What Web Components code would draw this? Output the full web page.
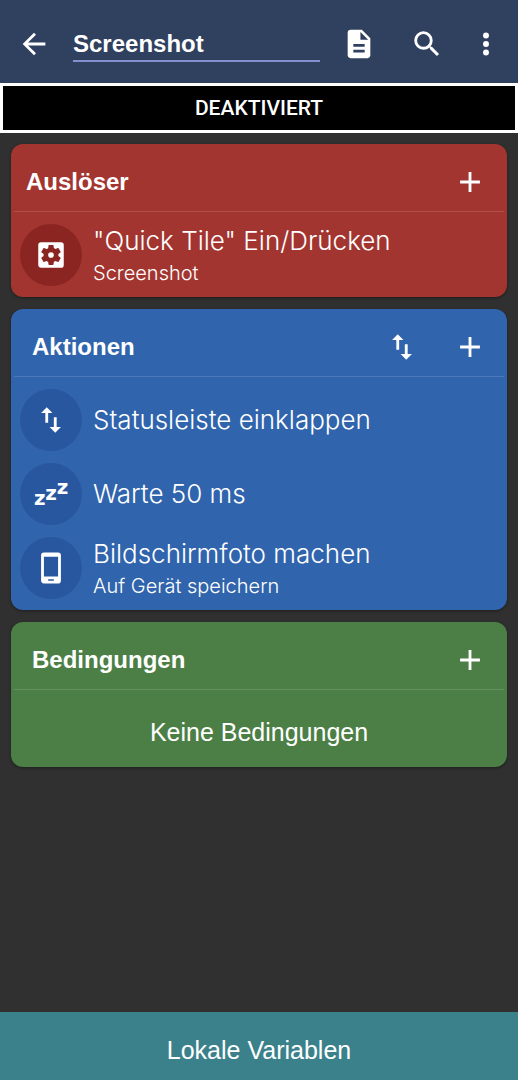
<!DOCTYPE html>
<html lang="de">
<head>
<meta charset="utf-8">
<meta name="viewport" content="width=device-width, initial-scale=1">
<title>Screenshot</title>
<style>
  body { margin: 0; background: #303030; color: #fff; font-family: "Liberation Sans", Arial, sans-serif; }
</style>
</head>
<body>
<macro-editor></macro-editor>

<script>
const ICONS = {
  back: '<path d="M20 11H7.800l5.600-5.600L12 4l-8 8 8 8 1.400-1.400L7.800 13H20z"/>',
  file: '<path fill-rule="evenodd" d="M14 2H6c-1.100 0-2 .9-2 2v16c0 1.100.9 2 2 2h12c1.100 0 2-.9 2-2V8zM16 18H8v-2h8zM16 14H8v-2h8zM13 9V3.500L18.500 9z"/>',
  search: '<path d="M15.500 14h-.79l-.28-.27A6.471 6.471 0 0 0 16 9.500 6.500 6.500 0 1 0 9.500 16c1.610 0 3.090-.59 4.230-1.570l.27.28v.79l5 4.990L20.490 19zM9.500 14a4.500 4.500 0 1 1 0-9 4.500 4.500 0 0 1 0 9z"/>',
  more: '<circle cx="12" cy="6" r="2.100"/><circle cx="12" cy="12" r="2.100"/><circle cx="12" cy="18" r="2.100"/>',
  plus: '<path d="M19 13h-6v6h-2v-6H5v-2h6V5h2v6h6z"/>',
  swap: '<path d="M16 17V10h-2v7h-3l4 4 4-4zM9 3L5 7h3v7h2V7h3z"/>',
  gear: '<path d="M12 10a2 2 0 1 0 0 4 2 2 0 0 0 0-4zm7-7H5a2 2 0 0 0-2 2v14c0 1.100.9 2 2 2h14a2 2 0 0 0 2-2V5a2 2 0 0 0-2-2zm-1.750 9c0 .23-.02.46-.05.68l1.480 1.160c.13.11.17.3.08.45l-1.400 2.420c-.09.15-.27.21-.43.15l-1.740-.7c-.36.28-.76.51-1.180.69l-.26 1.850c-.03.17-.18.3-.35.3h-2.800c-.17 0-.32-.13-.35-.29l-.26-1.850c-.43-.18-.82-.41-1.180-.69l-1.740.7c-.16.06-.34 0-.43-.15l-1.400-2.420c-.09-.15-.05-.34.08-.45l1.480-1.160c-.03-.23-.05-.46-.05-.69s.02-.46.05-.68l-1.480-1.160c-.13-.11-.17-.3-.08-.45l1.400-2.420c.09-.15.27-.21.43-.15l1.740.7c.36-.28.76-.51 1.180-.69l.26-1.850c.03-.17.18-.3.35-.3h2.800c.17 0 .32.13.35.29l.26 1.850c.43.18.82.41 1.180.69l1.740-.7c.16-.06.34 0 .43.15l1.400 2.420c.09.15.05.34-.08.45l-1.480 1.160c.03.23.05.46.05.69z"/>',
  phone: '<path fill-rule="evenodd" d="M17 1H7a2 2 0 0 0-2 2v18c0 1.100.9 2 2 2h10a2 2 0 0 0 2-2V3a2 2 0 0 0-2-2zM14 21h-4v-1h4zM17 18H7V4h10z"/>',
  sleep: '<g font-family="DejaVu Sans" font-weight="700" font-size="14"><text x="0" y="20">z</text><text x="8" y="16">z</text><text x="16" y="12">z</text></g>'
};

function define(name, html, setup) {
  customElements.define(name, class extends HTMLElement {
    constructor() {
      super();
      const template = document.createElement('template');
      template.innerHTML = html;
      this.attachShadow({ mode: 'open' }).append(template.content.cloneNode(true));
    }
    connectedCallback() { if (setup) setup(this, this.shadowRoot); }
  });
}

define('app-icon', `
  <style>
    :host { display: block; width: 34px; height: 34px; flex: none; }
    svg { display: block; width: 100%; height: 100%; fill: #fff; overflow: visible; }
  </style>
  <svg viewBox="0 0 24 24" aria-hidden="true"></svg>`,
  (el, root) => { root.querySelector('svg').innerHTML = ICONS[el.getAttribute('name')]; });

define('icon-button', `
  <style>
    :host { display: block; flex: none; }
    button { display: block; margin: 0; padding: 0; border: 0; background: none; cursor: pointer; }
  </style>
  <button type="button"></button>`,
  (el, root) => {
    const button = root.querySelector('button');
    button.setAttribute('aria-label', el.getAttribute('label'));
    const icon = document.createElement('app-icon');
    icon.setAttribute('name', el.getAttribute('icon'));
    button.replaceChildren(icon);
  });

define('app-header', `
  <style>
    :host { display: block; background: #30405f; }
    header { display: flex; align-items: center; height: 83px; padding: 4px 15px 0 17px; box-sizing: border-box; }
    input { flex: 1; min-width: 0; height: 36px; margin: 0 22px; padding: 2px 0 0; box-sizing: border-box; border: 0;
      border-bottom: 2px solid #8490cb; border-radius: 0; outline: 0; background: none; color: #fff;
      font: bold 24px "Liberation Sans", Arial, sans-serif; }
    .tools { display: flex; gap: 34px; }
    .more { margin-left: 25px; }
  </style>
  <header>
    <icon-button icon="back" label="Zurück"></icon-button>
    <input type="text" value="Screenshot" aria-label="Makroname" spellcheck="false">
    <div class="tools">
      <icon-button icon="file" label="Protokoll"></icon-button>
      <icon-button icon="search" label="Suchen"></icon-button>
    </div>
    <icon-button class="more" icon="more" label="Mehr"></icon-button>
  </header>`);

define('status-banner', `
  <style>
    :host { display: block; }
    button { display: block; width: 100%; height: 50px; margin: 0; padding: 0; border: 3px solid #fff;
      background: #000; color: #fff; font: 500 21px Roboto, sans-serif; }
  </style>
  <button type="button"><slot></slot></button>`);

define('macro-card', `
  <style>
    :host { display: block; border-radius: 12px; background: var(--card); box-shadow: 0 1px 3px rgba(0, 0, 0, .4); }
    header { display: flex; align-items: center; height: 67px; padding: 8px 20px 0 var(--inset, 21px); box-sizing: border-box; }
    h2 { flex: 1; margin: 0; font-size: 24px; line-height: 32px; font-weight: 700; }
    .tools { display: flex; gap: 34px; }
    .body { margin: 0 3px; padding: 6px 0 5px; border-top: 1px solid rgba(255, 255, 255, .14); }
  </style>
  <section>
    <header><h2></h2><div class="tools"><slot name="tools"></slot></div></header>
    <div class="body"><slot></slot></div>
  </section>`,
  (el, root) => { root.querySelector('h2').textContent = el.getAttribute('heading'); });

define('macro-item', `
  <style>
    :host { display: flex; align-items: center; gap: 11px; height: 74px; padding-left: 6px; font-family: Inter, sans-serif; font-weight: 300; }
    .disc { display: grid; place-items: center; flex: none; width: 62px; height: 62px; border-radius: 50%; background: var(--disc); }
    .name { font-size: 26px; line-height: 36px; }
    ::slotted(small) { display: block; font-size: 20px; line-height: 28px; }
  </style>
  <div class="disc"></div>
  <div><div class="name"><slot></slot></div><slot name="detail"></slot></div>`,
  (el, root) => {
    const icon = document.createElement('app-icon');
    icon.setAttribute('name', el.getAttribute('icon'));
    root.querySelector('.disc').replaceChildren(icon);
  });

define('empty-note', `
  <style>
    :host { display: block; padding: 22px 0 16px; text-align: center; font-size: 25px; line-height: 28px; }
  </style>
  <slot></slot>`);

define('variables-bar', `
  <style>
    :host { display: block; }
    button { display: block; width: 100%; height: 68px; margin: 0; padding: 8px 0 0; border: 0; background: #3b818c;
      color: #fff; font: 25px "Liberation Sans", Arial, sans-serif; }
  </style>
  <button type="button"><slot></slot></button>`);

define('macro-editor', `
  <style>
    :host { display: flex; flex-direction: column; min-height: 100vh; }
    main { flex: 1; display: flex; flex-direction: column; gap: 12px; padding: 11px 11px 12px; }
    .triggers { --card: #a33531; --disc: #8a2521; --inset: 15px; }
    .actions { --card: #3064ad; --disc: #28579f; }
    .conditions { --card: #4c7f45; }
  </style>
  <app-header></app-header>
  <status-banner>DEAKTIVIERT</status-banner>
  <main>
    <macro-card class="triggers" heading="Auslöser">
      <icon-button slot="tools" icon="plus" label="Auslöser hinzufügen"></icon-button>
      <macro-item icon="gear">"Quick Tile" Ein/Drücken<small slot="detail">Screenshot</small></macro-item>
    </macro-card>
    <macro-card class="actions" heading="Aktionen">
      <icon-button slot="tools" icon="swap" label="Sortieren"></icon-button>
      <icon-button slot="tools" icon="plus" label="Aktion hinzufügen"></icon-button>
      <macro-item icon="swap">Statusleiste einklappen</macro-item>
      <macro-item icon="sleep">Warte 50 ms</macro-item>
      <macro-item icon="phone">Bildschirmfoto machen<small slot="detail">Auf Gerät speichern</small></macro-item>
    </macro-card>
    <macro-card class="conditions" heading="Bedingungen">
      <icon-button slot="tools" icon="plus" label="Bedingung hinzufügen"></icon-button>
      <empty-note>Keine Bedingungen</empty-note>
    </macro-card>
  </main>
  <variables-bar>Lokale Variablen</variables-bar>`);
</script>
</body>
</html>
